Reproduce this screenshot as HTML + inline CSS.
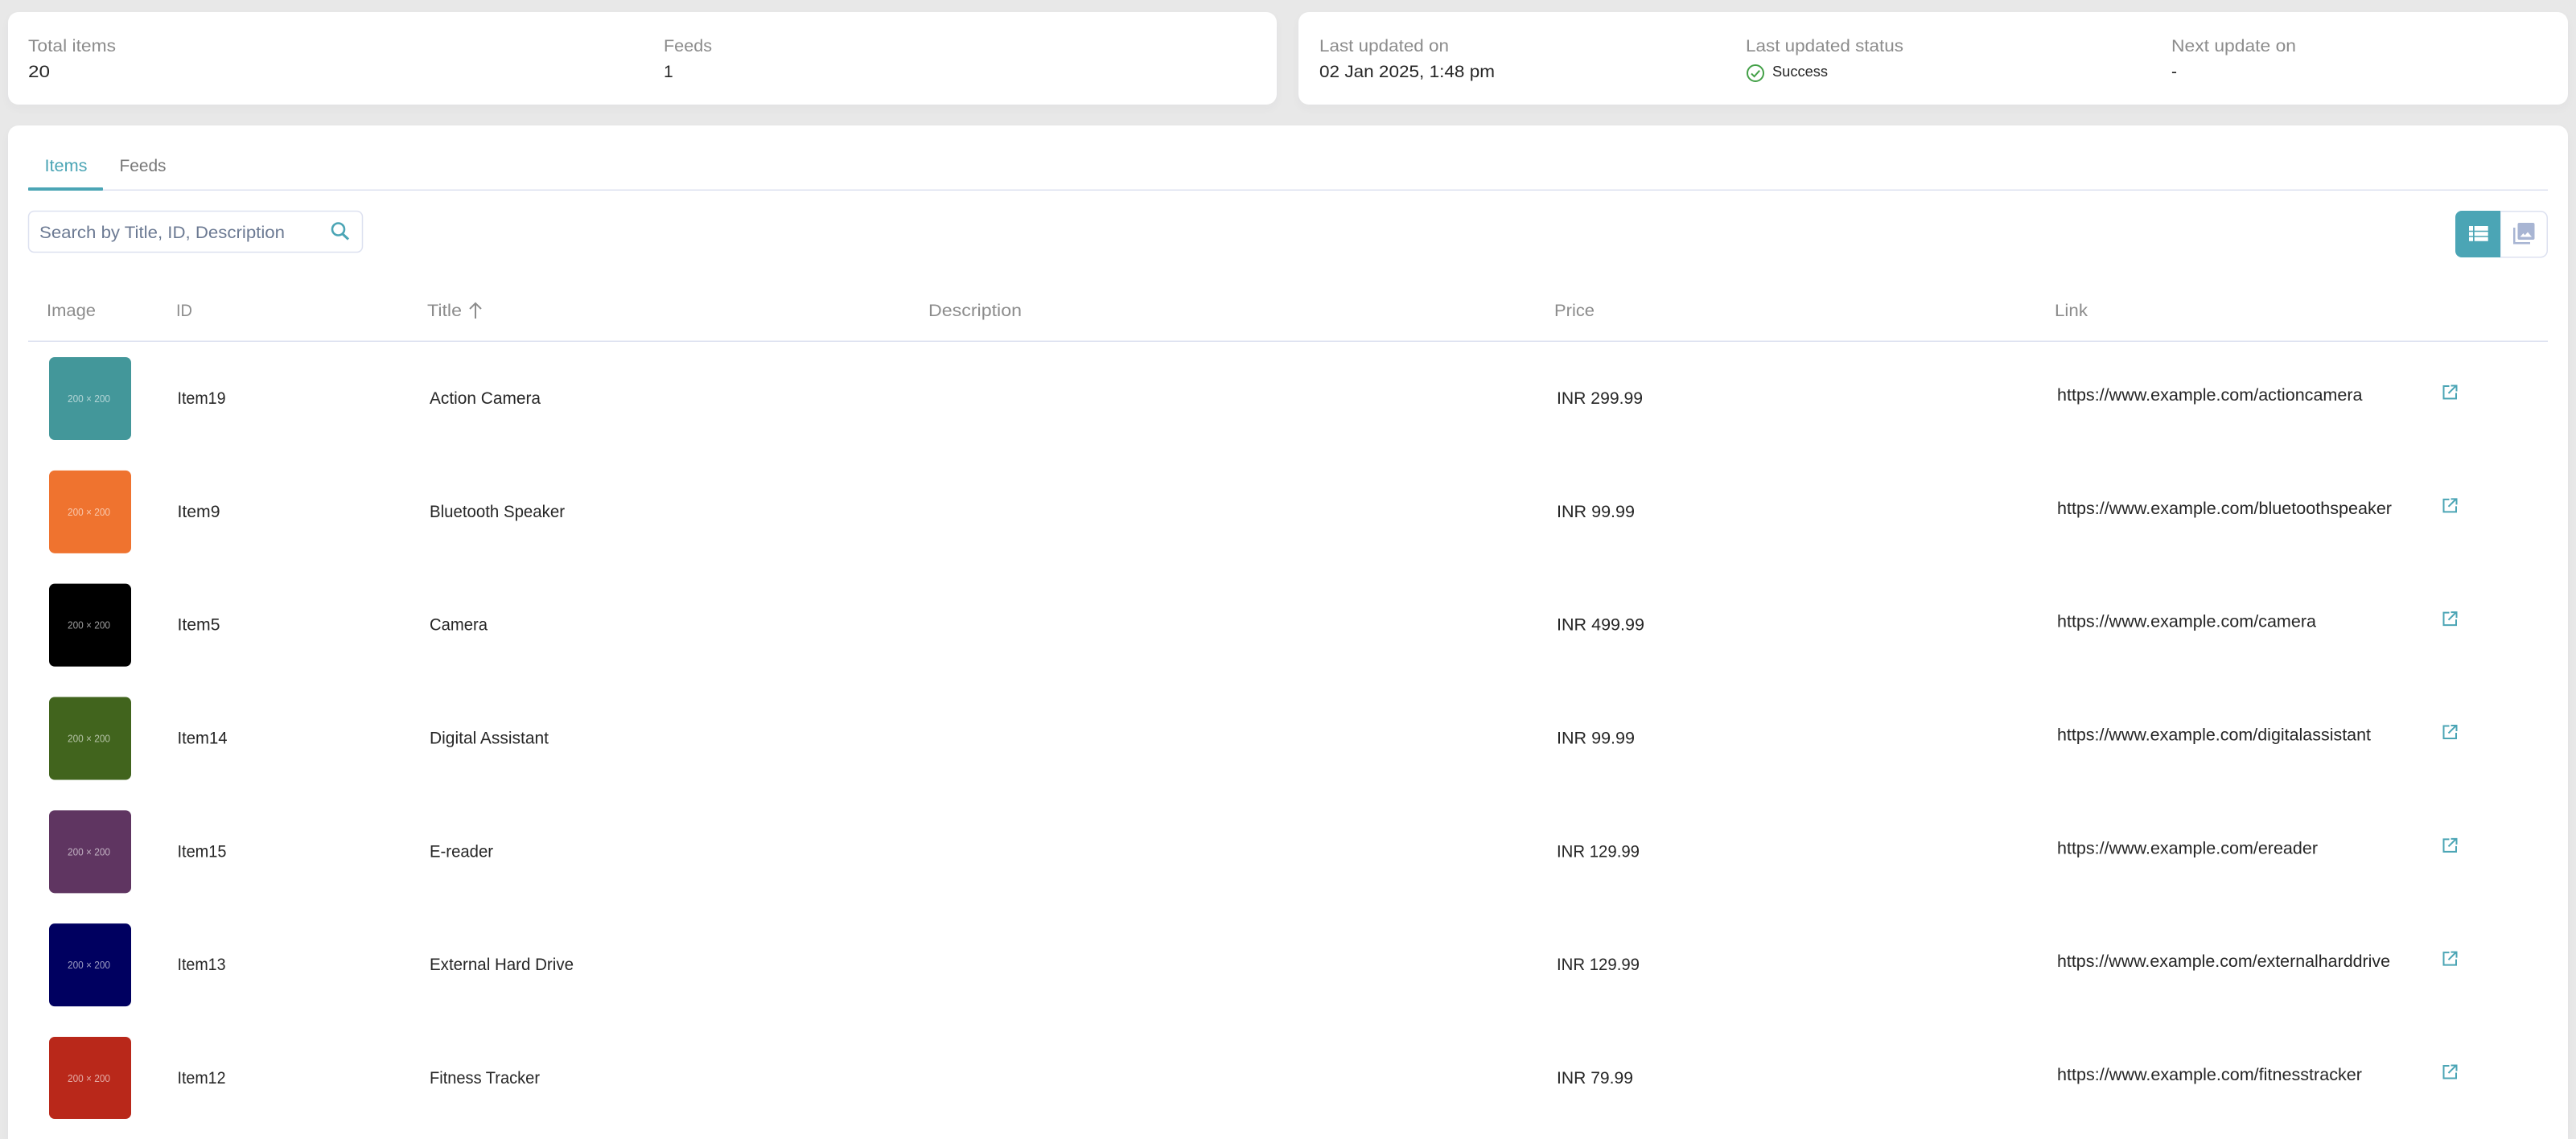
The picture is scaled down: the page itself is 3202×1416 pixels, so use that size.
<!DOCTYPE html>
<html lang="en"><head><meta charset="utf-8"><title>Items</title>
<style>
html,body{margin:0;padding:0;width:3202px;height:1416px;overflow:hidden;background:#e8e8e8}
#w{position:relative;width:3202px;height:1416px;overflow:hidden;background:#e8e8e8}
.c{position:absolute;background:#fff;border-radius:13px;box-shadow:0 5px 12px rgba(60,70,90,.035)}
svg{position:absolute;left:0;top:0;display:block}
text{font-family:"Liberation Sans",sans-serif;font-size:21px;fill:#262626}
.l{fill:#8c8c8c}
.p{font-size:13px;fill:#fff;fill-opacity:.6}
</style></head><body><div id="w">
<div class="c" style="left:10px;top:15px;width:1577px;height:115px"></div>
<div class="c" style="left:1614px;top:15px;width:1578px;height:115px"></div>
<div class="c" style="left:10px;top:156px;width:3182px;height:1260px;border-radius:13px 13px 0 0"></div>
<svg width="3202" height="1416" viewBox="0 0 3202 1416" xmlns="http://www.w3.org/2000/svg">
<text class="l" x="35" y="64" textLength="109" lengthAdjust="spacingAndGlyphs">Total items</text>
<text x="35" y="96" textLength="27" lengthAdjust="spacingAndGlyphs">20</text>
<text class="l" x="825" y="64" textLength="60" lengthAdjust="spacingAndGlyphs">Feeds</text>
<text x="825" y="96">1</text>
<text class="l" x="1640" y="64" textLength="161" lengthAdjust="spacingAndGlyphs">Last updated on</text>
<text x="1640" y="96" textLength="218" lengthAdjust="spacingAndGlyphs">02 Jan 2025, 1:48 pm</text>
<text class="l" x="2170" y="64" textLength="196" lengthAdjust="spacingAndGlyphs">Last updated status</text>
<circle cx="2182" cy="91" r="10" fill="none" stroke="#43a047" stroke-width="2"/>
<path d="M2177 91.500l3.600 3.600 6.600-7.400" fill="none" stroke="#43a047" stroke-width="2"/>
<text x="2203" y="95" style="font-size:18px" textLength="69" lengthAdjust="spacingAndGlyphs">Success</text>
<text class="l" x="2699" y="64" textLength="155" lengthAdjust="spacingAndGlyphs">Next update on</text>
<text x="2699" y="96">-</text>

<text x="55.500" y="213" style="fill:#4ba5b5" textLength="53" lengthAdjust="spacingAndGlyphs">Items</text>
<text x="148.500" y="213" style="fill:#777" textLength="58" lengthAdjust="spacingAndGlyphs">Feeds</text>
<rect x="35" y="235.500" width="3132" height="1.500" fill="#dde1f0"/>
<rect x="35" y="233" width="93" height="4" rx="1" fill="#4ba5b5"/>

<rect x="35.500" y="262.500" width="415" height="51" rx="7" fill="#fff" stroke="#dde1f0" stroke-width="1.500"/>
<text x="49" y="296" style="fill:#6c7a93" textLength="305" lengthAdjust="spacingAndGlyphs">Search by Title, ID, Description</text>
<circle cx="420.500" cy="285" r="7.500" fill="none" stroke="#4ba5b5" stroke-width="2.600"/>
<path d="M426 291l7 6.500" fill="none" stroke="#4ba5b5" stroke-width="3"/>

<path d="M3108 262.750h50a8.250 8.250 0 0 1 8.250 8.250v40.500a8.250 8.250 0 0 1-8.250 8.250h-50z" fill="#fff" stroke="#dde1f0" stroke-width="1.500"/>
<path d="M3108 262h-48a8 8 0 0 0-8 8v42a8 8 0 0 0 8 8h48z" fill="#4ba5b5"/>
<path d="M3069 281h5v5.700h-5zM3075.700 281h17v5.700h-17zM3069 288.300h5v5h-5zM3075.700 288.300h17v5h-17zM3069 294.700h5v5h-5zM3075.700 294.700h17v5h-17z" fill="#fff"/>
<path d="M3124 283h2.500v18h18.500v2.500h-21z" fill="#a8b5d3"/>
<rect x="3129.500" y="277" width="21" height="21" rx="2" fill="#a8b5d3"/>
<path d="M3132.500 294.500l4-4.500 2 2.500 3.500-4 5 6z" fill="#fff"/>

<text class="l" x="58" y="393" textLength="61" lengthAdjust="spacingAndGlyphs">Image</text>
<text class="l" x="219" y="393" textLength="20" lengthAdjust="spacingAndGlyphs">ID</text>
<text class="l" x="531" y="393" textLength="43" lengthAdjust="spacingAndGlyphs">Title</text>
<path d="M591 396v-19M584 384l7-7 7 7" fill="none" stroke="#8c8c8c" stroke-width="2"/>
<text class="l" x="1154" y="393" textLength="116" lengthAdjust="spacingAndGlyphs">Description</text>
<text class="l" x="1932" y="393" textLength="50" lengthAdjust="spacingAndGlyphs">Price</text>
<text class="l" x="2554" y="393" textLength="41" lengthAdjust="spacingAndGlyphs">Link</text>
<rect x="35" y="423.500" width="3132" height="1.500" fill="#dde1f0"/>

<rect x="61" y="444" width="102" height="103" rx="7" fill="#43979a"/>
<text class="p" x="84" y="500" textLength="53" lengthAdjust="spacingAndGlyphs">200 × 200</text>
<text x="220.500" y="502" textLength="60" lengthAdjust="spacingAndGlyphs">Item19</text>
<text x="534" y="502" textLength="138" lengthAdjust="spacingAndGlyphs">Action Camera</text>
<text x="1935" y="502" textLength="107" lengthAdjust="spacingAndGlyphs">INR 299.99</text>
<text x="2557" y="498" textLength="379.500" lengthAdjust="spacingAndGlyphs">https://www.example.com/actioncamera</text>
<path d="M3044.500 480h-7v15.500h15.500v-7M3043.500 489l9.500-9.500M3046.500 479.500h7v7" fill="none" stroke="#4ba5b5" stroke-width="2"/>

<g transform="translate(0 140.830)">
<rect x="61" y="444" width="102" height="103" rx="7" fill="#ef732f"/>
<text class="p" x="84" y="500" textLength="53" lengthAdjust="spacingAndGlyphs">200 × 200</text>
<text x="220.500" y="502" textLength="53" lengthAdjust="spacingAndGlyphs">Item9</text>
<text x="534" y="502" textLength="168" lengthAdjust="spacingAndGlyphs">Bluetooth Speaker</text>
<text x="1935" y="502" textLength="97" lengthAdjust="spacingAndGlyphs">INR 99.99</text>
<text x="2557" y="498" textLength="416" lengthAdjust="spacingAndGlyphs">https://www.example.com/bluetoothspeaker</text>
<path d="M3044.500 480h-7v15.500h15.500v-7M3043.500 489l9.500-9.500M3046.500 479.500h7v7" fill="none" stroke="#4ba5b5" stroke-width="2"/>
</g>

<g transform="translate(0 281.670)">
<rect x="61" y="444" width="102" height="103" rx="7" fill="#000"/>
<text class="p" x="84" y="500" textLength="53" lengthAdjust="spacingAndGlyphs">200 × 200</text>
<text x="220.500" y="502" textLength="53" lengthAdjust="spacingAndGlyphs">Item5</text>
<text x="534" y="502" textLength="72" lengthAdjust="spacingAndGlyphs">Camera</text>
<text x="1935" y="502" textLength="109" lengthAdjust="spacingAndGlyphs">INR 499.99</text>
<text x="2557" y="498" textLength="322" lengthAdjust="spacingAndGlyphs">https://www.example.com/camera</text>
<path d="M3044.500 480h-7v15.500h15.500v-7M3043.500 489l9.500-9.500M3046.500 479.500h7v7" fill="none" stroke="#4ba5b5" stroke-width="2"/>
</g>

<g transform="translate(0 422.500)">
<rect x="61" y="444" width="102" height="103" rx="7" fill="#41641d"/>
<text class="p" x="84" y="500" textLength="53" lengthAdjust="spacingAndGlyphs">200 × 200</text>
<text x="220.500" y="502" textLength="62" lengthAdjust="spacingAndGlyphs">Item14</text>
<text x="534" y="502" textLength="148" lengthAdjust="spacingAndGlyphs">Digital Assistant</text>
<text x="1935" y="502" textLength="97" lengthAdjust="spacingAndGlyphs">INR 99.99</text>
<text x="2557" y="498" textLength="390" lengthAdjust="spacingAndGlyphs">https://www.example.com/digitalassistant</text>
<path d="M3044.500 480h-7v15.500h15.500v-7M3043.500 489l9.500-9.500M3046.500 479.500h7v7" fill="none" stroke="#4ba5b5" stroke-width="2"/>
</g>

<g transform="translate(0 563.330)">
<rect x="61" y="444" width="102" height="103" rx="7" fill="#5f3561"/>
<text class="p" x="84" y="500" textLength="53" lengthAdjust="spacingAndGlyphs">200 × 200</text>
<text x="220.500" y="502" textLength="61" lengthAdjust="spacingAndGlyphs">Item15</text>
<text x="534" y="502" textLength="79" lengthAdjust="spacingAndGlyphs">E-reader</text>
<text x="1935" y="502" textLength="103" lengthAdjust="spacingAndGlyphs">INR 129.99</text>
<text x="2557" y="498" textLength="324" lengthAdjust="spacingAndGlyphs">https://www.example.com/ereader</text>
<path d="M3044.500 480h-7v15.500h15.500v-7M3043.500 489l9.500-9.500M3046.500 479.500h7v7" fill="none" stroke="#4ba5b5" stroke-width="2"/>
</g>

<g transform="translate(0 704.170)">
<rect x="61" y="444" width="102" height="103" rx="7" fill="#000060"/>
<text class="p" x="84" y="500" textLength="53" lengthAdjust="spacingAndGlyphs">200 × 200</text>
<text x="220.500" y="502" textLength="60" lengthAdjust="spacingAndGlyphs">Item13</text>
<text x="534" y="502" textLength="179" lengthAdjust="spacingAndGlyphs">External Hard Drive</text>
<text x="1935" y="502" textLength="103" lengthAdjust="spacingAndGlyphs">INR 129.99</text>
<text x="2557" y="498" textLength="414" lengthAdjust="spacingAndGlyphs">https://www.example.com/externalharddrive</text>
<path d="M3044.500 480h-7v15.500h15.500v-7M3043.500 489l9.500-9.500M3046.500 479.500h7v7" fill="none" stroke="#4ba5b5" stroke-width="2"/>
</g>

<g transform="translate(0 845)">
<rect x="61" y="444" width="102" height="102" rx="7" fill="#b9281a"/>
<text class="p" x="84" y="500" textLength="53" lengthAdjust="spacingAndGlyphs">200 × 200</text>
<text x="220.500" y="502" textLength="60" lengthAdjust="spacingAndGlyphs">Item12</text>
<text x="534" y="502" textLength="137" lengthAdjust="spacingAndGlyphs">Fitness Tracker</text>
<text x="1935" y="502" textLength="95" lengthAdjust="spacingAndGlyphs">INR 79.99</text>
<text x="2557" y="498" textLength="379" lengthAdjust="spacingAndGlyphs">https://www.example.com/fitnesstracker</text>
<path d="M3044.500 480h-7v15.500h15.500v-7M3043.500 489l9.500-9.500M3046.500 479.500h7v7" fill="none" stroke="#4ba5b5" stroke-width="2"/>
</g>
</svg>
</div></body></html>
